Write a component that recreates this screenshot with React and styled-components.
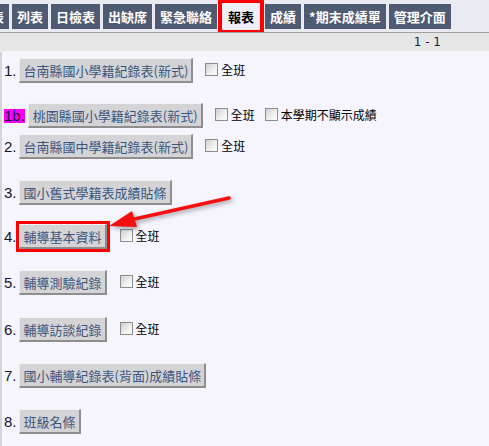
import React from "react";
import styled, { createGlobalStyle } from "styled-components";

const Global = createGlobalStyle`
  body {
    margin: 0;
    overflow: hidden;
    background: #f6f5fe;
    font-family: "Noto Sans CJK TC", sans-serif;
  }
`;

const Page = styled.div`
  width: 489px;
  height: 446px;
  display: flex;
  flex-direction: column;
  overflow: hidden;
`;

const TabBar = styled.ul`
  display: flex;
  list-style: none;
  margin: 0;
  padding: 4px 0 3px;
  background: #eaeaf2;
  overflow: hidden;
`;

const TabRow = styled.div`
  display: flex;
  gap: 3px;
  margin-left: -40px;
`;

const Tab = styled.li`
  height: 25px;
  line-height: 25px;
  padding: 0 5px;
  flex-shrink: 0;
  font-size: 13px;
  font-weight: bold;
  white-space: nowrap;
  color: ${(p) => (p.current ? "#000" : "#fff")};
  background: ${(p) => (p.current ? "#efeff7" : "#4f5a73")};
  outline: ${(p) => (p.current ? "4px solid #f00" : "none")};
  outline-offset: 1px;
  margin: ${(p) => (p.current ? "0 3px" : "0")};
`;

const Band = styled.div`
  height: 18px;
  border-top: 1px solid #a0a0a0;
  border-bottom: 1px solid #f4f4f4;
  background: #e6e6e6;
  display: flex;
  justify-content: flex-end;
  align-items: center;
  padding-right: 48px;
  font-family: "DejaVu Sans", sans-serif;
  font-size: 12px;
  color: #1c1c3c;
`;

const Content = styled.div`
  position: relative;
  flex: 1;
  border-left: 2px solid #d4d4dc;
  padding: 0 0 0 2px;
  background: #f6f5fe;
`;

const Row = styled.div`
  display: flex;
  align-items: center;
  height: 25px;
  margin-top: ${(p) => p.top}px;
`;

const Num = styled.span`
  font-family: "Liberation Sans", sans-serif;
  font-size: 15px;
  line-height: 14px;
  color: #14142a;
  margin-right: ${(p) => (p.mark ? 3 : 2)}px;
  background: ${(p) => (p.mark ? "#ff00ff" : "transparent")};
`;

const Button = styled.button`
  height: 25px;
  padding: 0 3px 0 4px;
  font-family: "Noto Sans CJK TC", sans-serif;
  font-size: 13px;
  line-height: 21px;
  color: #3b5780;
  background: #d4d4d6;
  border-style: solid;
  border-width: 1px 2px 2px 1px;
  border-color: #f2f2f2 #8e8e8e #8e8e8e #ececec;
  white-space: nowrap;
  outline: ${(p) => (p.marked ? "3px solid #f00" : "none")};
  outline-offset: 0;
`;

const Check = styled.label`
  display: flex;
  align-items: center;
  gap: 3px;
  margin-left: ${(p) => p.gap}px;
  margin-bottom: 3px;
  font-size: 12px;
  color: #000;
  white-space: nowrap;
`;

const Box = styled.span`
  width: 11px;
  height: 11px;
  border: 1px solid #8c8c8c;
  background: linear-gradient(135deg, #cfcfcf 0%, #eeeeee 55%, #ffffff 100%);
`;

const Arrow = styled.svg`
  position: absolute;
  left: 0;
  top: 0;
  pointer-events: none;
  filter: drop-shadow(2px 2px 2px rgba(0, 0, 0, 0.35));
`;

const tabs = ["座位表", "列表", "日檢表", "出缺席", "緊急聯絡", "報表", "成績", "*期末成績單", "管理介面"];

const rows = [
  { n: "1.", label: "台南縣國小學籍紀錄表(新式)", top: 6, checks: [{ t: "全班", gap: 12 }] },
  { n: "1b.", mark: true, label: "桃園縣國小學籍紀錄表(新式)", top: 20, checks: [{ t: "全班", gap: 12 }, { t: "本學期不顯示成績", gap: 10 }] },
  { n: "2.", label: "台南縣國中學籍紀錄表(新式)", top: 6, checks: [{ t: "全班", gap: 12 }] },
  { n: "3.", label: "國小舊式學籍表成績貼條", top: 21, checks: [] },
  { n: "4.", label: "輔導基本資料", top: 19, marked: true, checks: [{ t: "全班", gap: 13 }] },
  { n: "5.", label: "輔導測驗紀錄", top: 21, checks: [{ t: "全班", gap: 13 }] },
  { n: "6.", label: "輔導訪談紀錄", top: 22, checks: [{ t: "全班", gap: 13 }] },
  { n: "7.", label: "國小輔導紀錄表(背面)成績貼條", top: 21, checks: [] },
  { n: "8.", label: "班級名條", top: 21, checks: [] },
];

export default function App() {
  return (
    <Page>
      <Global />
      <TabBar>
        <TabRow>
          {tabs.map((t) => (
            <Tab key={t} current={t === "報表"}>
              {t}
            </Tab>
          ))}
        </TabRow>
      </TabBar>
      <Band>1 - 1</Band>
      <Content>
        {rows.map((r) => (
          <Row key={r.n} top={r.top}>
            <Num mark={r.mark}>{r.n}</Num>
            <Button marked={r.marked}>{r.label}</Button>
            {r.checks.map((c) => (
              <Check key={c.t} gap={c.gap}>
                <Box />
                {c.t}
              </Check>
            ))}
          </Row>
        ))}
        <Arrow width="489" height="394" viewBox="0 0 489 394">
          <line x1="227" y1="146" x2="128" y2="168" stroke="#f41010" strokeWidth="3.5" strokeLinecap="round" />
          <polygon points="107,174 135,175 130,159" fill="#f41010" />
        </Arrow>
      </Content>
    </Page>
  );
}
